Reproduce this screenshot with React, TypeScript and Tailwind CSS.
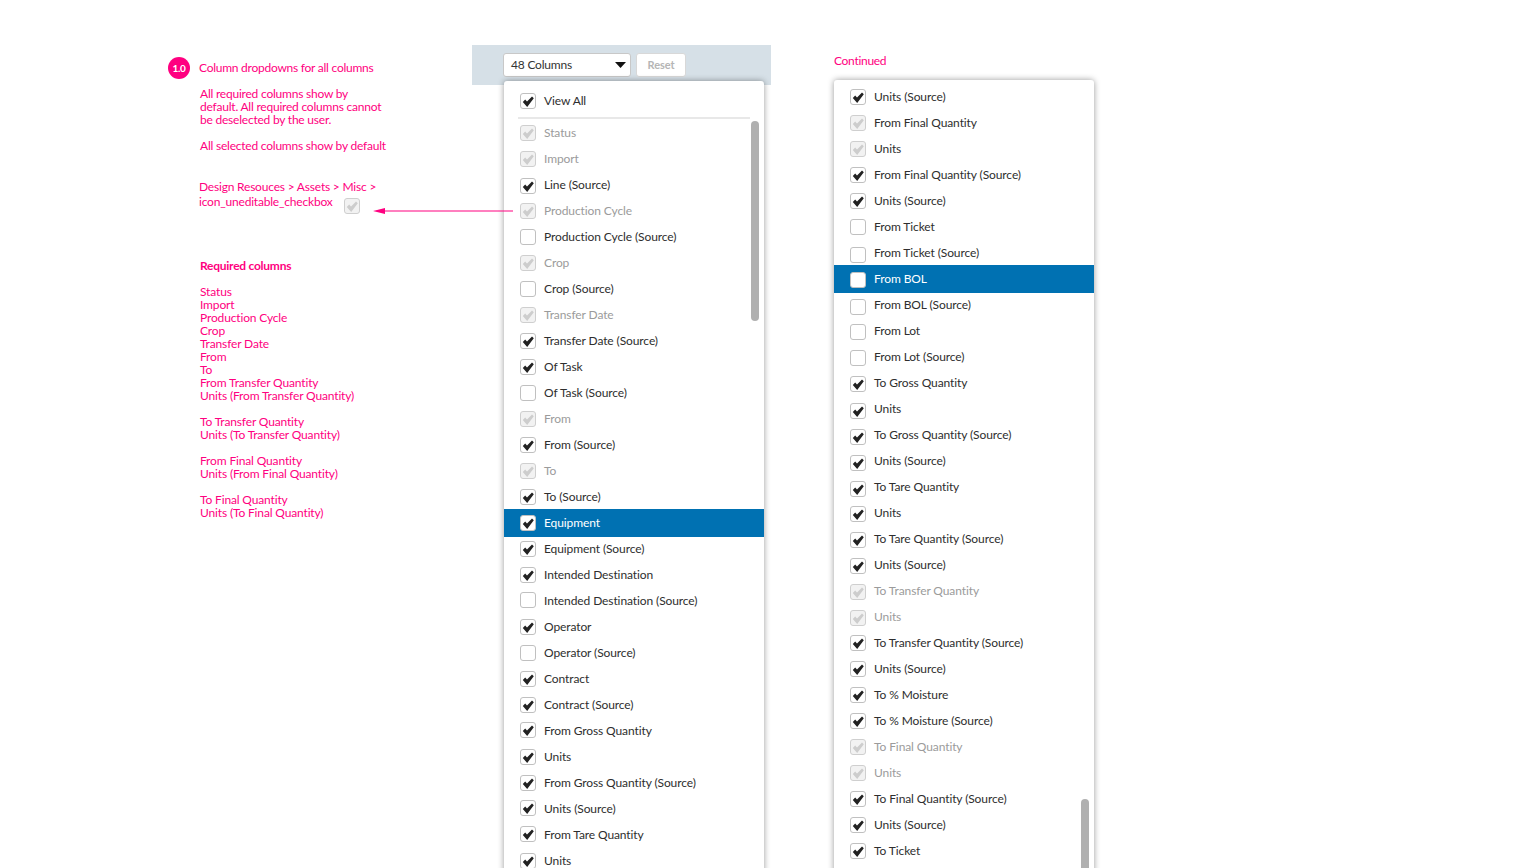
type Col = {
  label: string;
  state: "on" | "off" | "locked";
  active?: boolean;
  dark?: boolean;
  dy?: number;
};

const on = (label: string, dy = 0): Col => ({ label, state: "on", dy });
const off = (label: string, dy = 0): Col => ({ label, state: "off", dy });
const locked = (label: string, dy = 0): Col => ({ label, state: "locked", dy });

const leftCols: Col[] = [
  locked("Status"),
  locked("Import"),
  on("Line (Source)", 1),
  locked("Production Cycle"),
  off("Production Cycle (Source)"),
  locked("Crop"),
  off("Crop (Source)"),
  locked("Transfer Date"),
  on("Transfer Date (Source)"),
  on("Of Task"),
  off("Of Task (Source)"),
  locked("From"),
  on("From (Source)"),
  locked("To"),
  on("To (Source)"),
  { label: "Equipment", state: "on", active: true },
  on("Equipment (Source)"),
  on("Intended Destination"),
  off("Intended Destination (Source)", -1),
  on("Operator"),
  off("Operator (Source)"),
  on("Contract"),
  on("Contract (Source)"),
  on("From Gross Quantity", -1),
  on("Units"),
  on("From Gross Quantity (Source)"),
  on("Units (Source)", -1),
  on("From Tare Quantity", -1),
  on("Units"),
];

const rightCols: Col[] = [
  on("Units (Source)"),
  { label: "From Final Quantity", state: "locked", dark: true },
  { label: "Units", state: "locked", dark: true },
  on("From Final Quantity (Source)"),
  on("Units (Source)"),
  off("From Ticket"),
  off("From Ticket (Source)", 2),
  { label: "From BOL", state: "off", active: true, dy: 1 },
  off("From BOL (Source)", 2),
  off("From Lot", 1),
  off("From Lot (Source)", 1),
  on("To Gross Quantity", 1),
  on("Units", 2),
  on("To Gross Quantity (Source)", 2),
  on("Units (Source)", 2),
  on("To Tare Quantity", 2),
  on("Units", 1),
  on("To Tare Quantity (Source)", 1),
  on("Units (Source)", 1),
  locked("To Transfer Quantity", 1),
  locked("Units", 1),
  on("To Transfer Quantity (Source)"),
  on("Units (Source)"),
  on("To % Moisture"),
  on("To % Moisture (Source)"),
  locked("To Final Quantity"),
  locked("Units"),
  on("To Final Quantity (Source)"),
  on("Units (Source)"),
  on("To Ticket"),
];

const requiredGroups = [
  [
    "Status",
    "Import",
    "Production Cycle",
    "Crop",
    "Transfer Date",
    "From",
    "To",
    "From Transfer Quantity",
    "Units (From Transfer Quantity)",
  ],
  ["To Transfer Quantity", "Units (To Transfer Quantity)"],
  ["From Final Quantity", "Units (From Final Quantity)"],
  ["To Final Quantity", "Units (To Final Quantity)"],
];

const nudge = (dy = 0) =>
  dy === 2 ? "translate-y-0.5" : dy === 1 ? "translate-y-px" : dy === -1 ? "-translate-y-px" : "";

const Checkbox = ({ state, className = "" }: { state: Col["state"]; className?: string }) => (
  <span
    className={`flex h-4 w-4 flex-none items-center justify-center rounded-[3px] border ${
      state === "locked" ? "border-[#cfcfcf] bg-[#f2f2f2]" : "border-[#c0c0c0] bg-white"
    } ${className}`}
  >
    {state !== "off" && (
      <svg viewBox="0 0 12 12" className="h-3 w-3">
        <path
          d="M0.8 7 L3.2 4.6 L5 6.4 L10 1.4 L11.8 3.2 L5.2 12 Z"
          fill={state === "locked" ? "#cdcdcd" : "#222222"}
        />
      </svg>
    )}
  </span>
);

const Row = ({ col }: { col: Col }) => (
  <div
    className={
      col.active
        ? "relative z-10 -my-px flex h-7 items-center gap-2 bg-[#0071b2] pl-4 text-white"
        : `flex h-[26px] items-center gap-2 pl-4 ${
            col.state === "locked" && !col.dark ? "text-[#9b9b9b]" : "text-[#2e2e2e]"
          }`
    }
  >
    <Checkbox state={col.state} className={nudge(col.dy)} />
    <span>{col.label}</span>
  </div>
);

const Scrollbar = ({ className }: { className: string }) => (
  <div className={`absolute w-2 rounded-full bg-[#b0b0b0] ${className}`} />
);

export default function App() {
  return (
    <div className="flex h-[868px] overflow-hidden bg-white font-['Lato','Noto_Sans',sans-serif] text-[12px] tracking-[-0.1px]">
      {/* notes */}
      <div className="relative w-[472px] flex-none pl-[168px] pt-[57px] text-[#ff0080]">
        <div className="flex items-center gap-[9px] tracking-[-0.25px]">
          <span className="flex h-[22px] w-[22px] items-center justify-center rounded-full bg-[#ff0080] text-[10px] font-bold text-white">
            1.0
          </span>
          <span className="leading-[22px]">Column dropdowns for all columns</span>
        </div>
        <div className="pl-8 pt-[8px] leading-[13px] tracking-[-0.22px]">
          <p>
            All required columns show by
            <br />
            default. All required columns cannot
            <br />
            be deselected by the user.
          </p>
          <p className="mt-[13px]">All selected columns show by default</p>
        </div>
        <div className="pl-[31px] pt-[27px] tracking-[-0.2px]">
          <p className="leading-[15px]">
            Design Resouces &gt; Assets &gt; Misc &gt;
            <br />
            icon_uneditable_checkbox
          </p>
          <Checkbox state="locked" className="absolute left-[344px] top-[198px]" />
        </div>
        <div className="pl-8 pt-[50px] leading-[13px] tracking-[-0.15px]">
          <p className="font-bold tracking-[-0.25px]">Required columns</p>
          <div className="mt-[13px] flex flex-col gap-[13px]">
            {requiredGroups.map((group, i) => (
              <div key={i}>
                {group.map((line) => (
                  <p key={line}>{line}</p>
                ))}
              </div>
            ))}
          </div>
        </div>
      </div>

      {/* first dropdown */}
      <div className="relative w-[299px] flex-none pt-[45px]">
        <div className="flex h-10 items-center gap-[5px] bg-[#d6e0e7] pl-[31px]">
          <div className="flex h-6 w-[128px] items-center justify-between rounded-[3px] border border-[#c8c8c8] bg-white pl-[7px] pr-[4px] tracking-[-0.2px] text-[#333]">
            <span>48 Columns</span>
            <svg viewBox="0 0 11 6" className="h-[6px] w-[11px]">
              <path d="M0 0 H11 L5.5 6 Z" fill="#111" />
            </svg>
          </div>
          <div className="flex h-6 w-[50px] items-center justify-center rounded-[3px] border border-[#d8d8d8] bg-white text-[11px] font-bold text-[#b5b5b5]">
            Reset
          </div>
        </div>
        <div className="relative z-10 ml-8 -mt-1 w-[260px] rounded-[3px] bg-white pb-10 shadow-[0_0_6px_rgba(0,0,0,0.4)]">
          <div className="flex h-9 items-center gap-2 pl-4 pt-1 text-[#2e2e2e]">
            <Checkbox state="on" />
            <span>View All</span>
          </div>
          <div className="mx-[14px] h-0.5 bg-[#e8e8e8]" />
          <div className="pt-px">
            {leftCols.map((col, i) => (
              <Row key={i} col={col} />
            ))}
          </div>
          <Scrollbar className="right-[5px] top-[40px] h-[200px]" />
        </div>
        {/* arrow pointing at the uneditable checkbox */}
        <svg viewBox="0 0 140 8" className="absolute left-[-99px] top-[207px] z-20 h-2 w-[140px]">
          <path d="M0 4 L12 1 V3.5 H140 V4.5 H12 V7 Z" fill="#ff0080" />
        </svg>
      </div>

      {/* continued */}
      <div className="ml-[63px] w-[260px] flex-none pt-[54px]">
        <p className="leading-[14px] tracking-[-0.3px] text-[#ff0080]">Continued</p>
        <div className="relative mt-[12px] rounded-[3px] bg-white pb-10 pt-1 shadow-[0_0_6px_rgba(0,0,0,0.4)]">
          {rightCols.map((col, i) => (
            <Row key={i} col={col} />
          ))}
          <Scrollbar className="right-[5px] top-[719px] h-[120px]" />
        </div>
      </div>
    </div>
  );
}
